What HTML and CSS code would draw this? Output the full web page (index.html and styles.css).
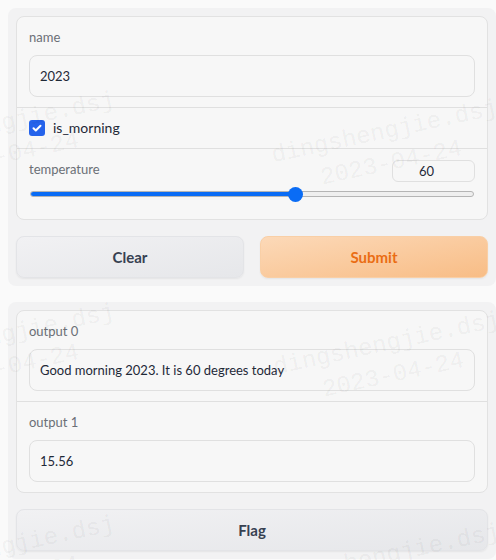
FILE: index.html
```html
<!DOCTYPE html>
<html>
<head>
<meta charset="utf-8">
<link rel="stylesheet" href="styles.css">
</head>
<body>
<div class="page">
  <div class="panel">
    <div class="box">
      <div class="field">
        <div class="lbl">name</div>
        <div class="input">2023</div>
      </div>
      <div class="field check-field">
        <span class="cb"><svg width="16" height="16" viewBox="0 0 16 16"><path d="M4.5 8.2l2.3 2.3 4.7-4.8" fill="none" stroke="#fff" stroke-width="2" stroke-linecap="round" stroke-linejoin="round"/></svg></span>
        <span class="cb-label">is_morning</span>
      </div>
      <div class="field slider-field">
        <div class="slider-head">
          <span class="lbl">temperature</span>
          <div class="num">60</div>
        </div>
        <div class="slider">
          <div class="track"><div class="fill" style="width:59.7%"></div></div>
          <div class="thumb" style="left:59.7%"></div>
        </div>
      </div>
    </div>
    <div class="btns">
      <div class="btn sec">Clear</div>
      <div class="btn pri">Submit</div>
    </div>
  </div>
  <div class="panel">
    <div class="box">
      <div class="field">
        <div class="lbl">output 0</div>
        <div class="input">Good morning 2023. It is 60 degrees today</div>
      </div>
      <div class="field">
        <div class="lbl">output 1</div>
        <div class="input">15.56</div>
      </div>
    </div>
    <div class="btns">
      <div class="btn sec full">Flag</div>
    </div>
  </div>
  <div class="wm">
    <div class="mark m1"><div>dingshengjie.dsj</div><div>2023-04-24</div></div>
    <div class="mark m2"><div>dingshengjie.dsj</div><div>2023-04-24</div></div>
    <div class="mark m3"><div>dingshengjie.dsj</div><div>2023-04-24</div></div>
    <div class="mark m4"><div>dingshengjie.dsj</div><div>2023-04-24</div></div>
    <div class="mark m5"><div>dingshengjie.dsj</div><div>2023-04-24</div></div>
    <div class="mark m6"><div>dingshengjie.dsj</div><div>2023-04-24</div></div>
  </div>
</div>
</body>
</html>
```
FILE: styles.css
```css
* { box-sizing: border-box; }
html, body { margin: 0; padding: 0; }
body {
  background: #fafafa;
  font-family: Lato, "Noto Sans", sans-serif;
  color: #1f2937;
  width: 496px;
  height: 560px;
  overflow: hidden;
}
.page {
  position: relative;
  padding: 8px 0 8px 8px;
  display: flex;
  flex-direction: column;
  gap: 16px;
  height: 560px;
}
.panel {
  background: #f2f2f3;
  border-radius: 8px;
  padding: 8px;
  display: flex;
  flex-direction: column;
  gap: 16px;
}
.box {
  background: #f7f7f7;
  border: 1px solid #e2e2e2;
  border-radius: 8px;
  display: flex;
  flex-direction: column;
}
.field {
  padding: 12px 12px 10px;
  border-top: 1px solid #e0e0e0;
}
.field:first-child { border-top: none; }
.lbl {
  font-size: 13px;
  line-height: 16px;
  color: #6b6f76;
  margin-bottom: 10px;
}
.input {
  height: 42px;
  border: 1px solid #e0e0e0;
  border-radius: 8px;
  background: #f7f7f7;
  padding: 0 10px;
  display: flex;
  align-items: center;
  font-size: 13px;
  color: #1f2937;
}
.check-field {
  display: flex;
  align-items: center;
  gap: 8px;
  padding: 12px;
}
.cb {
  width: 16px;
  height: 16px;
  border-radius: 3px;
  background: #2563eb;
  display: flex;
}
.cb-label {
  font-size: 14px;
  line-height: 16px;
  color: #1f2937;
}
.slider-field {
  padding: 11px 12px 18px;
}
.slider-head {
  display: flex;
  justify-content: space-between;
  align-items: center;
  height: 22px;
}
.slider-head .lbl { margin-bottom: 0; margin-top: -4px; }
.num {
  width: 83px;
  height: 22px;
  border: 1px solid #e0e0e0;
  border-radius: 6px;
  background: #f7f7f7;
  font-size: 13px;
  line-height: 20px;
  text-align: center;
  padding-right: 14px;
  color: #1f2937;
}
.slider {
  position: relative;
  height: 14px;
  margin: 5px 1px 0;
  display: flex;
  align-items: center;
}
.track {
  width: 100%;
  height: 6px;
  border-radius: 3px;
  background: #efefef;
  border: 1px solid #b5b5b5;
  overflow: hidden;
}
.fill {
  height: 100%;
  background: #0a6cf5;
}
.thumb {
  position: absolute;
  top: -0.5px;
  width: 15px;
  height: 15px;
  margin-left: -7px;
  border-radius: 50%;
  background: #0a6cf5;
}
.btns {
  display: flex;
  gap: 16px;
}
.btn {
  flex: 1;
  height: 42px;
  border-radius: 8px;
  display: flex;
  align-items: center;
  justify-content: center;
  font-size: 15px;
  font-weight: 700;
  box-shadow: 0 1px 2px rgba(0,0,0,0.06);
}
.sec {
  background: linear-gradient(to bottom right, #f1f1f3, #e6e7ea);
  border: 1px solid #e3e4e7;
  color: #374151;
}
.pri {
  background: linear-gradient(to bottom right, #fcd9b8, #f8bd86);
  border: 1px solid #f9cfa6;
  color: #ea6d14;
}
.wm {
  position: absolute;
  inset: 0;
  overflow: hidden;
  pointer-events: none;
}
.mark {
  position: absolute;
  width: 260px;
  margin-left: -130px;
  margin-top: -32px;
  font-family: "Liberation Mono", monospace;
  font-size: 24px;
  line-height: 32px;
  text-align: center;
  color: rgba(0,0,0,0.055);
  transform: rotate(-12deg);
  white-space: nowrap;
}
.m1 { left: 388px; top: 148px; }
.m2 { left: 5px; top: 140px; }
.m3 { left: 390px; top: 360px; }
.m4 { left: 5px; top: 352px; }
.m5 { left: 390px; top: 572px; }
.m6 { left: 5px; top: 564px; }
```
